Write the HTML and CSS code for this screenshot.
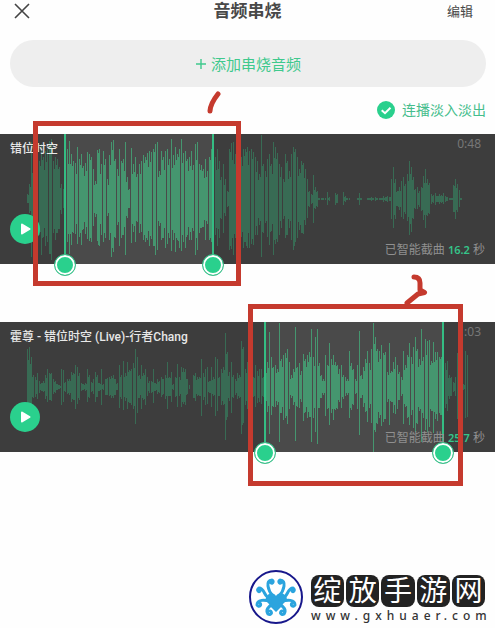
FILE: index.html
```html
<!DOCTYPE html>
<html lang="zh-CN">
<head>
<meta charset="utf-8">
<meta name="viewport" content="width=device-width, initial-scale=1">
<title>音频串烧</title>
<link rel="stylesheet" href="styles.css">
</head>
<body>
<header class="topbar">
  <button class="icon-button" type="button" aria-label="关闭">
    <svg width="16" height="16" viewBox="0 0 16 16"><path d="M1 1 15 15M15 1 1 15"/></svg>
  </button>
  <h1 class="title">音频串烧</h1>
  <button class="edit" type="button">编辑</button>
</header>

<main>
  <div class="actions">
    <button class="add" type="button">
      <svg width="12" height="12" viewBox="0 0 12 12"><path d="M6 1V11M1 6H11"/></svg>
      <span>添加串烧音频</span>
    </button>
    <label class="fade" for="fade">
      <span class="check">
        <input id="fade" type="checkbox" checked>
        <svg width="18" height="18" viewBox="0 0 18 18"><path d="M4.7 9.2 8 12.2 13.5 6.8"/></svg>
      </span>
      <span>连播淡入淡出</span>
    </label>
  </div>

  <div class="tracks">
    <section class="track track-first">
      <svg class="wave" viewBox="0 0 495 130" preserveAspectRatio="none" data-wave="0"></svg>
      <div class="selection"></div>
      <div class="row">
        <h2 class="name">错位时空</h2>
        <span class="length">0:48</span>
      </div>
      <div class="row row-bottom">
        <button class="play" type="button" aria-label="播放"><svg width="30" height="30" viewBox="0 0 30 30"><path d="M12 10.500 19.500 15 12 19.500Z"/></svg></button>
        <p class="note">已智能截曲 <b>16.2</b> 秒</p>
      </div>
      <input class="handle" type="range" min="0" max="495" value="65" aria-label="起点">
      <input class="handle" type="range" min="0" max="495" value="213" aria-label="终点">
      <div class="frame"></div>
      <svg class="mark" width="14" height="24" viewBox="0 0 14 24"><path d="M11 3C7 8 3.500 13 3 20"/></svg>
    </section>

    <section class="track track-second">
      <svg class="wave" viewBox="0 0 495 130" preserveAspectRatio="none" data-wave="1"></svg>
      <div class="selection"></div>
      <div class="row">
        <h2 class="name">霍尊 - 错位时空 (Live)-行者Chang</h2>
        <span class="length">1:03</span>
      </div>
      <div class="row row-bottom">
        <button class="play" type="button" aria-label="播放"><svg width="30" height="30" viewBox="0 0 30 30"><path d="M12 10.500 19.500 15 12 19.500Z"/></svg></button>
        <p class="note">已智能截曲 <b>25.7</b> 秒</p>
      </div>
      <input class="handle" type="range" min="0" max="495" value="265" aria-label="起点">
      <input class="handle" type="range" min="0" max="495" value="443" aria-label="终点">
      <div class="frame"></div>
      <svg class="mark" width="24" height="32" viewBox="0 0 24 32"><path d="M10 3C14 3 16 5 16 9V16L20.500 18.500 14 20 3 29"/></svg>
    </section>
  </div>
</main>

<footer class="brand">
  <svg class="logo" width="56" height="56" viewBox="0 0 56 56">
    <circle cx="28" cy="28" r="26"/>
    <path class="body" d="M19 27C22 23 26 24 28 27 30 24 34 23 38 27 41 32 35 33 34 37L28 43 22 37C21 33 15 32 19 27Z"/>
    <g class="arms">
      <path d="M25 27C20 22 17 11 24 11 26 12 25 15 23 14"/>
      <path d="M31 27C36 22 39 11 32 11 30 12 31 15 33 14"/>
      <path d="M22 29C16 29 17 19 11 19 8 21 11 24 12 22"/>
      <path d="M34 29C40 29 39 19 45 19 48 21 45 24 44 22"/>
      <path d="M22 32C17 31 9 30 9 36 11 39 14 36 12 34"/>
      <path d="M34 32C39 31 47 30 47 36 45 39 42 36 44 34"/>
      <path d="M24 36C21 37 17 41 20 45 23 47 25 43 22 42"/>
      <path d="M32 36C35 37 39 41 36 45 33 47 31 43 34 42"/>
    </g>
  </svg>
  <div class="brand-text">
    <div class="tiles"><span>绽</span><span>放</span><span>手</span><span>游</span><span>网</span></div>
    <div class="site">www.gxhuaer.com</div>
  </div>
</footer>
<script src="waves.js"></script>
</body>
</html>
```
FILE: styles.css
```css
* { box-sizing: border-box; }

body {
  margin: 0;
  min-height: 100vh;
  display: flex;
  flex-direction: column;
  overflow: hidden;
  background: #fefefe;
  color: #484848;
  font-family: "Noto Sans", "Noto Sans CJK SC", sans-serif;
}

button {
  padding: 0;
  border: 0;
  background: none;
  color: inherit;
  font: inherit;
}

svg { display: block; fill: none; }

.topbar {
  display: grid;
  grid-template-columns: 1fr auto 1fr;
  align-items: center;
  height: 22px;
  padding: 0 14px;
}

.icon-button { justify-self: start; }
.icon-button svg { stroke: #444; stroke-width: 1.6; }

.title {
  margin: 0;
  font-size: 17px;
  font-weight: 700;
  line-height: 22px;
}

.edit { justify-self: end; padding-right: 8px; font-size: 13px; line-height: 20px; }

.actions {
  display: flex;
  flex-direction: column;
  gap: 14px;
  padding: 18px 9px 0 10px;
}

.add {
  display: flex;
  align-items: center;
  justify-content: center;
  gap: 4px;
  height: 47px;
  border-radius: 24px;
  background: #eee;
  color: #3fc98d;
  font-size: 15px;
}
.add svg { stroke: #3fc98d; stroke-width: 1.4; }

.fade {
  display: flex;
  align-self: flex-end;
  align-items: center;
  gap: 7px;
  color: #45bd8c;
  font-size: 14px;
  line-height: 18px;
}

.check { display: grid; }
.check > * { grid-area: 1 / 1; }
.check input {
  appearance: none;
  width: 18px;
  height: 18px;
  margin: 0;
  border-radius: 50%;
  background: #2ad08d;
}
.check svg { position: relative; stroke: #fff; stroke-width: 2; pointer-events: none; }

.tracks {
  display: flex;
  flex-direction: column;
  gap: 58px;
  padding-top: 15px;
}

.track {
  position: relative;
  display: flex;
  flex-direction: column;
  justify-content: space-between;
  height: 130px;
  padding: 2px 10px 4px;
  background: #3d3d3d;
}

.wave { position: absolute; inset: 0; width: 100%; height: 100%; }
.wave .quiet { stroke: #386b54; }
.wave .active { stroke: #45966f; }
.wave .range { fill: #4a4a4a; }

.selection {
  position: absolute;
  top: 0;
  bottom: 0;
  border: solid #34bd83;
  border-width: 0 2px;
}
.track-first .selection { left: 13%; width: 30.300%; }
.track-second .selection { left: 53.300%; width: 36.400%; }

.row {
  position: relative;
  display: flex;
  align-items: flex-start;
  justify-content: space-between;
}
.row-bottom { align-items: flex-end; }

.name {
  margin: 4px 0 0;
  color: #e8e8e8;
  font-family: Roboto, "Noto Sans CJK SC", sans-serif;
  font-size: 12px;
  font-weight: 500;
  line-height: 18px;
}
.length { padding-right: 4px; color: #777; font-size: 12px; line-height: 16px; }

.note { margin: 0; color: #909090; font-size: 12px; line-height: 20px; }
.note b { color: #35c58a; font-size: 11px; font-weight: 600; }

.play {
  width: 30px;
  height: 30px;
  margin-bottom: 16px;
  border-radius: 50%;
  background: #2ad08d;
}
.play svg { fill: #fff; stroke: #fff; stroke-width: 2; stroke-linejoin: round; }

.handle {
  position: absolute;
  bottom: -12px;
  left: -11px;
  width: calc(100% + 22px);
  height: 22px;
  margin: 0;
  appearance: none;
  background: none;
  pointer-events: none;
}
.handle::-webkit-slider-thumb {
  appearance: none;
  width: 22px;
  height: 22px;
  border: 1px solid #40bd8b;
  border-radius: 50%;
  background: #2ad08d;
  box-shadow: inset 0 0 0 2px #fff;
  pointer-events: auto;
}

.frame { position: absolute; border: 5px solid #c53a2e; pointer-events: none; }
.track-first .frame { top: -13px; bottom: -22px; left: 6.700%; width: 42%; }
.track-second .frame { top: -18px; bottom: -34px; left: 50%; width: 43.600%; }

.mark {
  position: absolute;
  stroke: #c53a2e;
  stroke-width: 5;
  stroke-linecap: round;
  stroke-linejoin: round;
}
.track-first .mark { top: -43px; left: 41.800%; }
.track-second .mark { top: -48px; left: 81.600%; }

.brand {
  display: flex;
  align-items: flex-end;
  justify-content: flex-end;
  gap: 7px;
  margin-top: auto;
  padding: 0 10px 3px 0;
}
.logo circle { fill: #fff; stroke: #17178b; stroke-width: 2; }
.logo .body { fill: #2ba4de; }
.logo .arms { stroke: #2ba4de; stroke-width: 3; stroke-linecap: round; stroke-linejoin: round; }

.brand-text { display: flex; flex-direction: column; width: 174px; }
.tiles { display: flex; gap: 2px; }
.tiles span {
  flex: 1;
  height: 32px;
  border-radius: 8px;
  background: #222;
  color: #fff;
  font-size: 28px;
  line-height: 31px;
  text-align: center;
}
.site {
  color: #333;
  font-size: 12px;
  font-weight: 500;
  letter-spacing: 5px;
  line-height: 18px;
  white-space: nowrap;
}
```
FILE: waves.js
```js
// Half-heights of the bars, two units apart, in runs that each start at x.
const waves = [
  {
    from: 65, to: 213,
    runs: [
      { x: 27, peaks: [5,15,57,30,34,40,38,55,42,48,50,58,60,38,42,40,32,15,10] },
      { x: 67, peaks: [50,58,45,38,36,52,40,45,33,36,47,45,42,30,18,49,50,35,48,40,20,44,57,59,40,30,50,38,40,57,22,10] },
      { x: 131, peaks: [51,35,42,25,35,38,44,42,46,48,47,50,55,57,28,48,42,48,50,40,60,44,52,45,50,60,46,48,40,42,48,34,55,57,35,34,30,40,28,42,50] },
      { x: 215, peaks: [42,50,38,22,35,20,8,50,56,57,45,52,46,42,50,50,52,48,50,47,42,38,25,64,35,28,40,45,35,57,52,46,35,32,20,45,38,28,45,52,50,42,30,38,36,30,20,8,5,24,12,8,1,1,1,1] },
      { x: 327, peaks: [7,2,0,0,6,5,0,0,7,3,1,1] },
      { x: 357, peaks: [1,6,1] },
      { x: 367, peaks: [1,1,2,1,2,1,1,1,3,2,3,2,20,32,20,8,12,18,22,15,25,38,32,22,10,12,8,12,23,30,20,16,5,4,6,3,5,4,6,3,2,1,1,14,20,15,9,1] }
    ]
  },
  {
    from: 265, to: 443,
    runs: [
      { x: 27, peaks: [38,40,30,12,10,14,6,4,6,12,18,14,14,8,6,3,2,18,17,5,8,8,15,14,22,20,14,4,3,4,18,12,5,8,15,12,4,18,3,8,9,10,11,12,8,4,22,12,26,14,25,17,18,24,38,30,12,22,14,18,10,6,6,18,4,8,6,10,8,12,25,10,15,3,10,23,10,20,19,18,8,2,0,12,14,10,10,28,14,18,20,6,20,10,30,28,10,18,20,54,35,15,25,12,8,14,12,46,40,18,25] },
      { x: 249, peaks: [20,20,10,22,16,18,18,10,20,25,55,30,20,22,18,64,28,32,34,38,25,12,18,60,20,24,16,33,28,32,35,58,30,50,58,24,12,8,32,22,44,28,32,25,22,18,22,12,10,8,36,24,18,8,22,56,12,20,28,36,24,38,64,50,38,36,42,34,35,15,44,16,25,30,22,15,10,36,22,32,44,30,40,50,38,28,58,30,48,46,47,26,45,35,35,30,30] },
      { x: 445, peaks: [24,26,12,10,5,10,34,10,5,3,36,32] }
    ]
  }
];

const ns = "http://www.w3.org/2000/svg";
const center = 65;

function add(svg, tag, attributes) {
  const node = document.createElementNS(ns, tag);
  for (const [key, value] of Object.entries(attributes)) node.setAttribute(key, value);
  svg.append(node);
}

document.querySelectorAll("[data-wave]").forEach((svg) => {
  const { from, to, runs } = waves[Number(svg.dataset.wave)];
  const paths = { quiet: "", active: "" };
  const bar = (x, up, down) => {
    const group = x > from && x < to ? "active" : "quiet";
    paths[group] += `M${x + 0.5} ${center - up}V${center + down}`;
  };
  for (const run of runs) {
    run.peaks.forEach((peak, i) => {
      if (!peak) return;
      const x = run.x + i * 2;
      bar(x, peak, Math.max(1, Math.round(peak * (0.86 + (i * 7 % 5) * 0.04))));
      // A shorter bar fills most of the gaps, so that the wave is dense but uneven.
      const next = run.peaks[i + 1] || 0;
      const fill = Math.round(Math.min(peak, next) * (0.7 + (i * 5 % 4) * 0.08));
      if (fill && i * 11 % 7 < 5) bar(x + 1, fill, fill);
    });
  }
  add(svg, "rect", { class: "range", x: from, y: 0, width: to - from, height: 130 });
  add(svg, "path", { class: "quiet", d: paths.quiet, "stroke-width": 1 });
  add(svg, "path", { class: "active", d: paths.active, "stroke-width": 1 });
});
```
